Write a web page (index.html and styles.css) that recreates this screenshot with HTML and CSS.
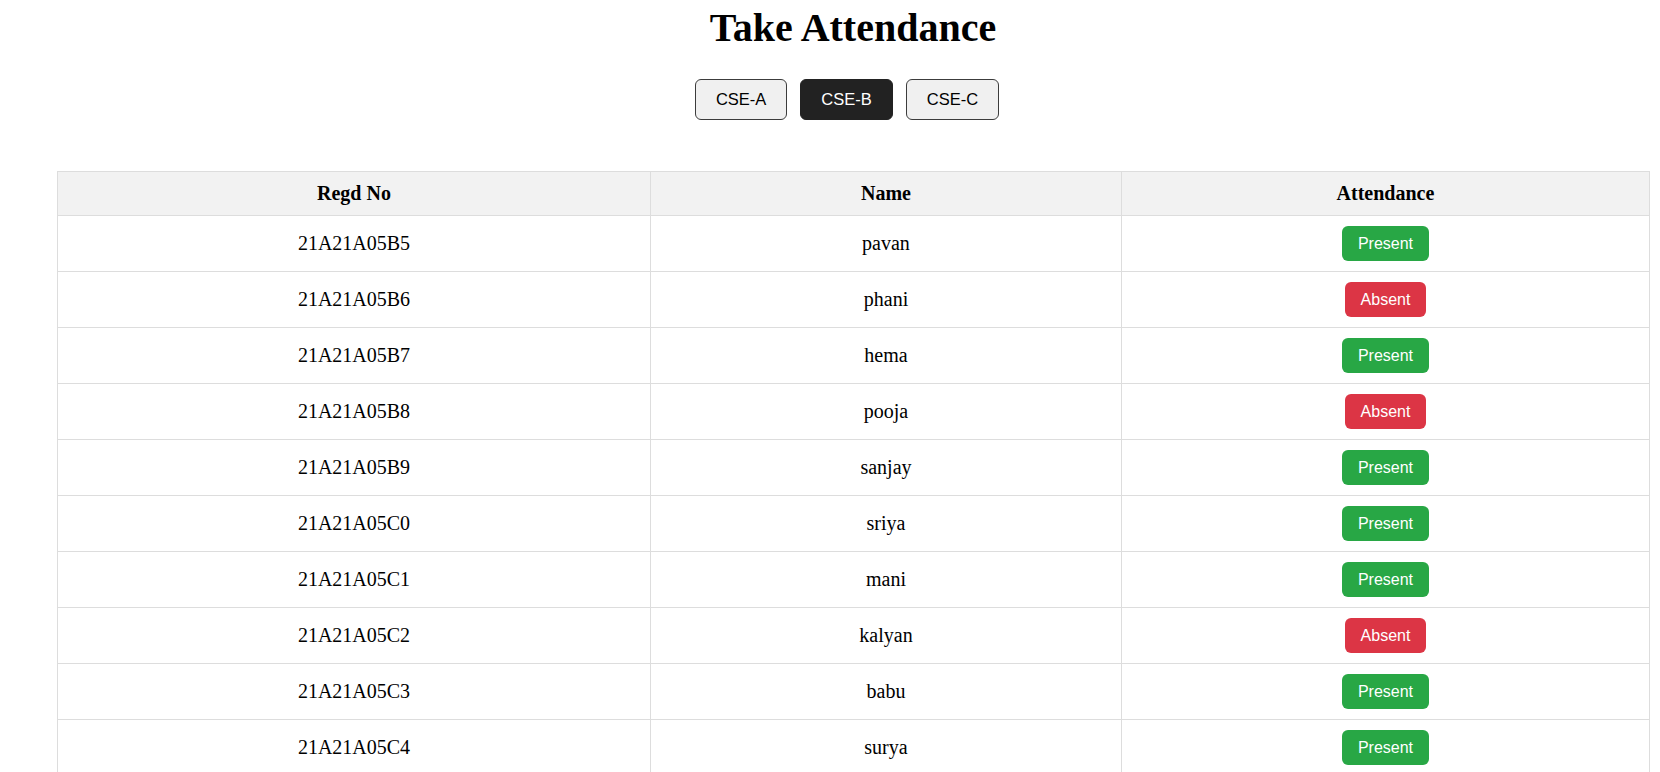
FILE: index.html
```html
<!DOCTYPE html>
<html lang="en">
<head>
<meta charset="utf-8">
<title>Take Attendance</title>
<link rel="stylesheet" href="styles.css">
</head>
<body>
<div class="page">
  <h1 class="title">Take Attendance</h1>
  <div class="sections">
    <button class="sec">CSE-A</button>
    <button class="sec active">CSE-B</button>
    <button class="sec">CSE-C</button>
  </div>
  <table class="att">
    <colgroup>
      <col class="c1"><col class="c2"><col class="c3">
    </colgroup>
    <thead>
      <tr><th>Regd No</th><th>Name</th><th>Attendance</th></tr>
    </thead>
    <tbody>
      <tr><td>21A21A05B5</td><td>pavan</td><td><button class="mark present">Present</button></td></tr>
      <tr><td>21A21A05B6</td><td>phani</td><td><button class="mark absent">Absent</button></td></tr>
      <tr><td>21A21A05B7</td><td>hema</td><td><button class="mark present">Present</button></td></tr>
      <tr><td>21A21A05B8</td><td>pooja</td><td><button class="mark absent">Absent</button></td></tr>
      <tr><td>21A21A05B9</td><td>sanjay</td><td><button class="mark present">Present</button></td></tr>
      <tr><td>21A21A05C0</td><td>sriya</td><td><button class="mark present">Present</button></td></tr>
      <tr><td>21A21A05C1</td><td>mani</td><td><button class="mark present">Present</button></td></tr>
      <tr><td>21A21A05C2</td><td>kalyan</td><td><button class="mark absent">Absent</button></td></tr>
      <tr><td>21A21A05C3</td><td>babu</td><td><button class="mark present">Present</button></td></tr>
      <tr><td>21A21A05C4</td><td>surya</td><td><button class="mark present">Present</button></td></tr>
    </tbody>
  </table>
</div>
</body>
</html>
```
FILE: styles.css
```css
html, body {
  margin: 0;
  padding: 0;
  background: #ffffff;
}
body {
  font-family: "Liberation Serif", "Times New Roman", serif;
  font-size: 20px;
  color: #000;
  overflow: hidden;
}
.page {
  width: 1592px;
  margin-left: 57px;
  padding-top: 6px;
}
.title {
  margin: 0 0 29px;
  font-size: 40px;
  line-height: 44px;
  font-weight: bold;
  text-align: center;
}
.sections {
  display: flex;
  justify-content: center;
  gap: 13px;
  margin-bottom: 51px;
  padding-right: 12px;
}
.sec {
  font-family: "Liberation Sans", Arial, sans-serif;
  font-size: 16.5px;
  line-height: 19px;
  padding: 10px 20px;
  border: 1px solid #3c3c3c;
  border-radius: 6px;
  background: #f0f0f0;
  color: #000;
  cursor: pointer;
}
.sec.active {
  background: #222222;
  border-color: #222222;
  color: #fff;
}
.att {
  width: 1592px;
  table-layout: fixed;
  border-collapse: collapse;
}
.c1 { width: 593px; }
.c2 { width: 471px; }
.c3 { width: 528px; }
.att th, .att td {
  border: 1px solid #dddddd;
  padding: 10px;
  text-align: center;
  font-size: 20px;
  line-height: 23px;
}
.att th {
  background: #f2f2f2;
  font-weight: bold;
}
.mark {
  font-family: "Liberation Sans", Arial, sans-serif;
  font-size: 16px;
  line-height: 19px;
  padding: 8px 16px;
  border: none;
  border-radius: 6px;
  color: #fff;
  vertical-align: middle;
  cursor: pointer;
}
.present { background: #28a745; }
.absent { background: #dc3545; }
```
